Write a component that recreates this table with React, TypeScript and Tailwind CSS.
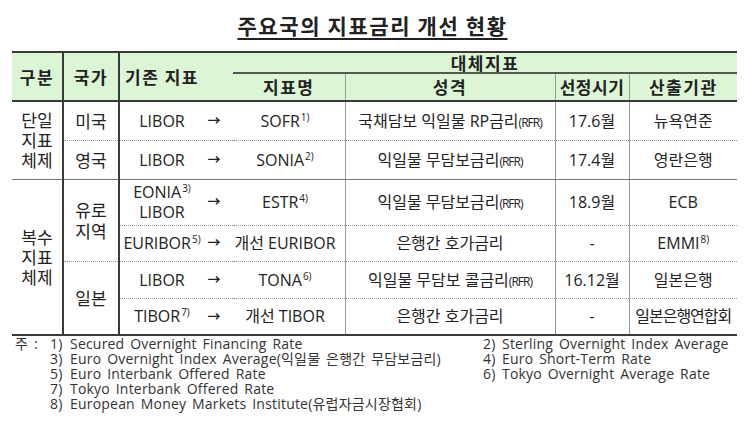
import React from "react";

const Sup = ({ children }: { children: React.ReactNode }) => (
  <sup className="text-[10px] -top-[6px] ml-[1px]">{children}</sup>
);

const Rfr = () => <span className="text-[12px] tracking-[-1px]">(RFR)</span>;

const Swap = ({ from, to }: { from: React.ReactNode; to: React.ReactNode }) => (
  <div className="grid grid-cols-[84px_20px_122px] items-center">
    <div className="text-center leading-[20px]">{from}</div>
    <div className="text-center text-[13px] font-bold">→</div>
    <div className="text-center">{to}</div>
  </div>
);

const dark = "border-[#3a3a3a]";
const td = "p-0 text-center align-middle";
const dot = "border-b [border-bottom-style:dotted]";
const kr = "font-['Noto_Sans_CJK_KR',sans-serif]";

const notesLeft = [
  ["1)", "Secured Overnight Financing Rate"],
  ["3)", "Euro Overnight Index Average(익일물 은행간 무담보금리)"],
  ["5)", "Euro Interbank Offered Rate"],
  ["7)", "Tokyo Interbank Offered Rate"],
  ["8)", "European Money Markets Institute(유럽자금시장협회)"],
];
const notesRight = [
  ["2)", "Sterling Overnight Index Average"],
  ["4)", "Euro Short-Term Rate"],
  ["6)", "Tokyo Overnight Average Rate"],
];

export default function App() {
  return (
    <div className="w-[745px] h-[434px] bg-white text-[#222] font-['Open_Sans','Noto_Sans_CJK_KR',sans-serif] overflow-hidden">
      <div className="pt-[11px] text-center">
        <h1 className={`inline-block text-[21px] font-bold leading-[28px] tracking-[1.6px] underline underline-offset-[4px] decoration-[1.5px] ${kr}`}>
          주요국의 지표금리 개선 현황
        </h1>
      </div>

      <div className="pl-[12px] pt-[11px]">
        <table className="w-[725px] border-collapse table-fixed text-[16px]">
          <colgroup>
            <col className="w-[51px]" />
            <col className="w-[56px]" />
            <col className="w-[114px]" />
            <col className="w-[112px]" />
            <col className="w-[210px]" />
            <col className="w-[74px]" />
            <col className="w-[108px]" />
          </colgroup>
          <thead className={`bg-[#dcf5d4] ${kr} text-[17px] font-bold tracking-[1.5px]`}>
            <tr className="h-[21px]">
              <th rowSpan={2} className={`p-0 border-t-2 border-b-2 border-r-2 ${dark}`}>구분</th>
              <th rowSpan={2} className={`p-0 border-t-2 border-b-2 border-r-2 ${dark}`}>국가</th>
              <th rowSpan={2} className={`p-0 pl-[5px] text-left border-t-2 border-b-2 ${dark}`}>기존 지표</th>
              <th colSpan={4} className={`p-0 leading-[19px] border-t-2 ${dark} border-b-2 border-b-[#555]`}>대체지표</th>
            </tr>
            <tr className="h-[28px]">
              <th className={`p-0 border-b-2 ${dark}`}>지표명</th>
              <th className={`p-0 border-b-2 ${dark} border-l border-l-[#999]`}>성격</th>
              <th className={`p-0 border-b-2 ${dark} border-l border-l-[#999] tracking-[0.5px]`}>선정시기</th>
              <th className={`p-0 border-b-2 ${dark} border-l border-l-[#999]`}>산출기관</th>
            </tr>
          </thead>
          <tbody className="[&_td]:border-[#999]">
            <tr className="h-[39px]">
              <td rowSpan={2} className={`${td} leading-[20px] ${kr} text-[17px] border-r-2 !border-r-[#3a3a3a] border-b !border-b-[#777]`}>
                단일<br />지표<br />체제
              </td>
              <td className={`${td} ${kr} text-[17px] border-r-2 !border-r-[#3a3a3a] ${dot}`}>미국</td>
              <td colSpan={2} className={`${td} ${dot}`}>
                <Swap from="LIBOR" to={<>SOFR<Sup>1)</Sup></>} />
              </td>
              <td className={`${td} border-l ${dot}`}>국채담보 익일물 RP금리<Rfr /></td>
              <td className={`${td} border-l ${dot}`}>17.6월</td>
              <td className={`${td} border-l ${dot}`}>뉴욕연준</td>
            </tr>
            <tr className="h-[39px]">
              <td className={`${td} ${kr} text-[17px] border-r-2 !border-r-[#3a3a3a] border-b !border-b-[#777]`}>영국</td>
              <td colSpan={2} className={`${td} border-b !border-b-[#777]`}>
                <Swap from="LIBOR" to={<>SONIA<Sup>2)</Sup></>} />
              </td>
              <td className={`${td} border-l border-b !border-b-[#777]`}>익일물 무담보금리<Rfr /></td>
              <td className={`${td} border-l border-b !border-b-[#777]`}>17.4월</td>
              <td className={`${td} border-l border-b !border-b-[#777]`}>영란은행</td>
            </tr>
            <tr className="h-[46px]">
              <td rowSpan={4} className={`${td} leading-[20px] ${kr} text-[17px] border-r-2 !border-r-[#3a3a3a] border-b-2 !border-b-[#3a3a3a]`}>
                복수<br />지표<br />체제
              </td>
              <td rowSpan={2} className={`${td} leading-[21px] ${kr} text-[17px] border-r-2 !border-r-[#3a3a3a] ${dot}`}>
                유로<br />지역
              </td>
              <td colSpan={2} className={`${td} ${dot}`}>
                <Swap from={<>EONIA<Sup>3)</Sup><br />LIBOR</>} to={<>ESTR<Sup>4)</Sup></>} />
              </td>
              <td className={`${td} border-l ${dot}`}>익일물 무담보금리<Rfr /></td>
              <td className={`${td} border-l ${dot}`}>18.9월</td>
              <td className={`${td} border-l ${dot}`}>ECB</td>
            </tr>
            <tr className="h-[36px]">
              <td colSpan={2} className={`${td} ${dot}`}>
                <Swap from={<>EURIBOR<Sup>5)</Sup></>} to="개선 EURIBOR" />
              </td>
              <td className={`${td} border-l ${dot}`}>은행간 호가금리</td>
              <td className={`${td} border-l ${dot}`}>-</td>
              <td className={`${td} border-l ${dot}`}>EMMI<Sup>8)</Sup></td>
            </tr>
            <tr className="h-[37px]">
              <td rowSpan={2} className={`${td} ${kr} text-[17px] border-r-2 !border-r-[#3a3a3a] border-b-2 !border-b-[#3a3a3a]`}>일본</td>
              <td colSpan={2} className={`${td} ${dot}`}>
                <Swap from="LIBOR" to={<>TONA<Sup>6)</Sup></>} />
              </td>
              <td className={`${td} border-l ${dot}`}>익일물 무담보 콜금리<Rfr /></td>
              <td className={`${td} border-l ${dot}`}>16.12월</td>
              <td className={`${td} border-l ${dot}`}>일본은행</td>
            </tr>
            <tr className="h-[37px]">
              <td colSpan={2} className={`${td} border-b-2 !border-b-[#3a3a3a]`}>
                <Swap from={<>TIBOR<Sup>7)</Sup></>} to="개선 TIBOR" />
              </td>
              <td className={`${td} border-l border-b-2 !border-b-[#3a3a3a]`}>은행간 호가금리</td>
              <td className={`${td} border-l border-b-2 !border-b-[#3a3a3a]`}>-</td>
              <td className={`${td} border-l border-b-2 !border-b-[#3a3a3a] tracking-[-1px]`}>일본은행연합회</td>
            </tr>
          </tbody>
        </table>
      </div>

      <div className="flex pl-[15px] text-[14px] leading-[15px] text-[#333] tracking-[0.2px] [word-spacing:2px]">
        <div className="w-[35px] shrink-0">주 :</div>
        <div className="grid grid-cols-[433px_1fr]">
          <div>
            {notesLeft.map(([n, t]) => (
              <div key={n} className="flex">
                <span className="w-[20px] shrink-0">{n}</span>
                <span>{t}</span>
              </div>
            ))}
          </div>
          <div>
            {notesRight.map(([n, t]) => (
              <div key={n} className="flex">
                <span className="w-[19px] shrink-0">{n}</span>
                <span>{t}</span>
              </div>
            ))}
          </div>
        </div>
      </div>
    </div>
  );
}
